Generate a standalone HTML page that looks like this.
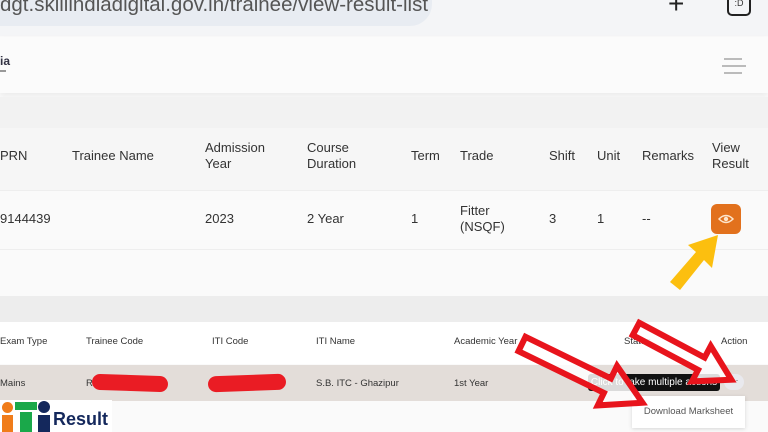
<!DOCTYPE html>
<html><head><meta charset="utf-8"><style>
body{margin:0;width:768px;height:432px;overflow:hidden;background:#fafafa;font-family:"Liberation Sans",sans-serif;position:relative;color:#333}
.a{position:absolute;white-space:nowrap}
.h{font-size:13px;color:#333;line-height:16px}
.s{font-size:9.5px;color:#333}
</style></head><body>
<div class="a" style="left:0;top:0;width:768px;height:36px;background:#f4f5f7"></div>
<div class="a" style="left:-20px;top:-20px;width:452px;height:46px;background:#e8ecf2;border-radius:0 0 22px 0"></div>
<div class="a" style="left:0;top:-7px;font-size:20.5px;color:#555">dgt.skillindiadigital.gov.in/trainee/view-result-list</div>
<div class="a" style="left:668px;top:-12px;font-size:28px;color:#222">+</div>
<div class="a" style="left:727px;top:-8px;width:20px;height:20px;border:2px solid #222;border-radius:5px;font-size:9px;text-align:center;line-height:18px">:D</div>
<div class="a" style="left:0;top:37px;width:768px;height:56px;background:#fbfbfb;box-shadow:0 3px 6px rgba(0,0,0,.06)"></div>
<div class="a" style="left:0;top:54px;font-size:12px;font-weight:bold;color:#334">ia</div>
<div class="a" style="left:0;top:70px;width:6px;height:2px;background:#999"></div>
<div class="a" style="left:724px;top:58px;width:18px;height:1.5px;background:#bbb"></div>
<div class="a" style="left:722px;top:65px;width:24px;height:1.5px;background:#bbb"></div>
<div class="a" style="left:724px;top:72px;width:18px;height:1.5px;background:#bbb"></div>
<div class="a" style="left:0;top:97px;width:768px;height:31px;background:#f2f2f2"></div>
<div class="a" style="left:0;top:128px;width:768px;height:62px;background:#f6f6f6"></div>
<div class="a h" style="left:0;top:148px">PRN</div>
<div class="a h" style="left:72px;top:148px">Trainee Name</div>
<div class="a h" style="left:205px;top:140px">Admission<br>Year</div>
<div class="a h" style="left:307px;top:140px">Course<br>Duration</div>
<div class="a h" style="left:411px;top:148px">Term</div>
<div class="a h" style="left:460px;top:148px">Trade</div>
<div class="a h" style="left:549px;top:148px">Shift</div>
<div class="a h" style="left:597px;top:148px">Unit</div>
<div class="a h" style="left:642px;top:148px">Remarks</div>
<div class="a h" style="left:712px;top:140px">View<br>Result</div>
<div class="a" style="left:0;top:190px;width:768px;height:58px;background:#fafafa;border-top:1px solid #eee;border-bottom:1px solid #eee"></div>
<div class="a h" style="left:0;top:211px">9144439</div>
<div class="a h" style="left:205px;top:211px">2023</div>
<div class="a h" style="left:307px;top:211px">2 Year</div>
<div class="a h" style="left:411px;top:211px">1</div>
<div class="a h" style="left:460px;top:203px">Fitter<br>(NSQF)</div>
<div class="a h" style="left:549px;top:211px">3</div>
<div class="a h" style="left:597px;top:211px">1</div>
<div class="a h" style="left:642px;top:211px">--</div>
<div class="a" style="left:711px;top:204px;width:30px;height:30px;background:#e2711d;border-radius:6px"></div>
<svg class="a" style="left:716px;top:210px" width="20" height="18"><path d="M3 9 Q10 2 17 9 Q10 16 3 9Z" fill="none" stroke="#fde5cc" stroke-width="1.5"/><circle cx="10" cy="9" r="2.2" fill="#fde5cc"/></svg>
<svg class="a" style="left:660px;top:230px" width="70" height="70"><polygon points="58,5 52,38 44,30 20,60 10,52 36,22 28,15" fill="#fcbf0f"/></svg>
<div class="a" style="left:0;top:296px;width:768px;height:26px;background:#ededed"></div>
<div class="a" style="left:0;top:322px;width:768px;height:42px;background:#fff"></div>
<div class="a s" style="left:0;top:336px">Exam Type</div>
<div class="a s" style="left:86px;top:336px">Trainee Code</div>
<div class="a s" style="left:212px;top:336px">ITI Code</div>
<div class="a s" style="left:316px;top:336px">ITI Name</div>
<div class="a s" style="left:454px;top:336px">Academic Year</div>
<div class="a s" style="left:624px;top:336px">Status</div>
<div class="a s" style="left:721px;top:336px">Action</div>
<div class="a" style="left:0;top:365px;width:768px;height:36px;background:#e3ddd9"></div>
<div class="a s" style="left:0;top:378px">Mains</div>
<div class="a s" style="left:86px;top:378px">R2</div>
<div class="a" style="left:92px;top:375px;width:76px;height:16px;background:#ea1c24;border-radius:8px;transform:rotate(2deg)"></div>
<div class="a" style="left:208px;top:375px;width:78px;height:16px;background:#ea1c24;border-radius:8px;transform:rotate(-2deg)"></div>
<div class="a s" style="left:316px;top:378px">S.B. ITC - Ghazipur</div>
<div class="a s" style="left:454px;top:378px">1st Year</div>
<div class="a" style="left:588px;top:374px;width:132px;height:17px;background:#111;border-radius:3px;color:#fff;font-size:10px;line-height:17px;text-align:center">Click to take multiple actions</div>
<div class="a" style="left:724px;top:374px;width:20px;height:16px;background:#e9e9ee;border-radius:8px;font-size:9px;text-align:center;line-height:13px;color:#555">···</div>
<div class="a" style="left:632px;top:396px;width:113px;height:32px;background:#fff;box-shadow:0 1px 4px rgba(0,0,0,.15);font-size:9.5px;color:#555;line-height:32px;text-align:center">Download Marksheet</div>
<svg class="a" style="left:0;top:0" width="768" height="432">
<g transform="translate(522,344) rotate(26)"><polygon points="0,-8 95,-8 95,-22 134,0 95,22 95,8 0,8" fill="#fff" fill-opacity=".85" stroke="#e8141c" stroke-width="6" stroke-linejoin="miter"/></g>
<g transform="translate(636,329) rotate(28)"><polygon points="0,-7 74,-7 74,-20 108,0 74,20 74,7 0,7" fill="#fff" fill-opacity=".85" stroke="#e8141c" stroke-width="6"/></g>
</svg>
<div class="a" style="left:0;top:400px;width:112px;height:32px;background:#fff"></div>
<div class="a" style="left:2px;top:402px;width:11px;height:11px;border-radius:50%;background:#f07c1a"></div>
<div class="a" style="left:2px;top:415px;width:11px;height:17px;background:#f07c1a"></div>
<div class="a" style="left:15px;top:402px;width:22px;height:8px;background:#1aa84a"></div>
<div class="a" style="left:20px;top:412px;width:12px;height:20px;background:#1aa84a"></div>
<div class="a" style="left:38px;top:401px;width:12px;height:12px;border-radius:50%;background:#14285c"></div>
<div class="a" style="left:38px;top:415px;width:12px;height:17px;background:#14285c"></div>
<div class="a" style="left:53px;top:409px;font-size:18px;font-weight:bold;color:#14285c">Result</div>
</body></html>
